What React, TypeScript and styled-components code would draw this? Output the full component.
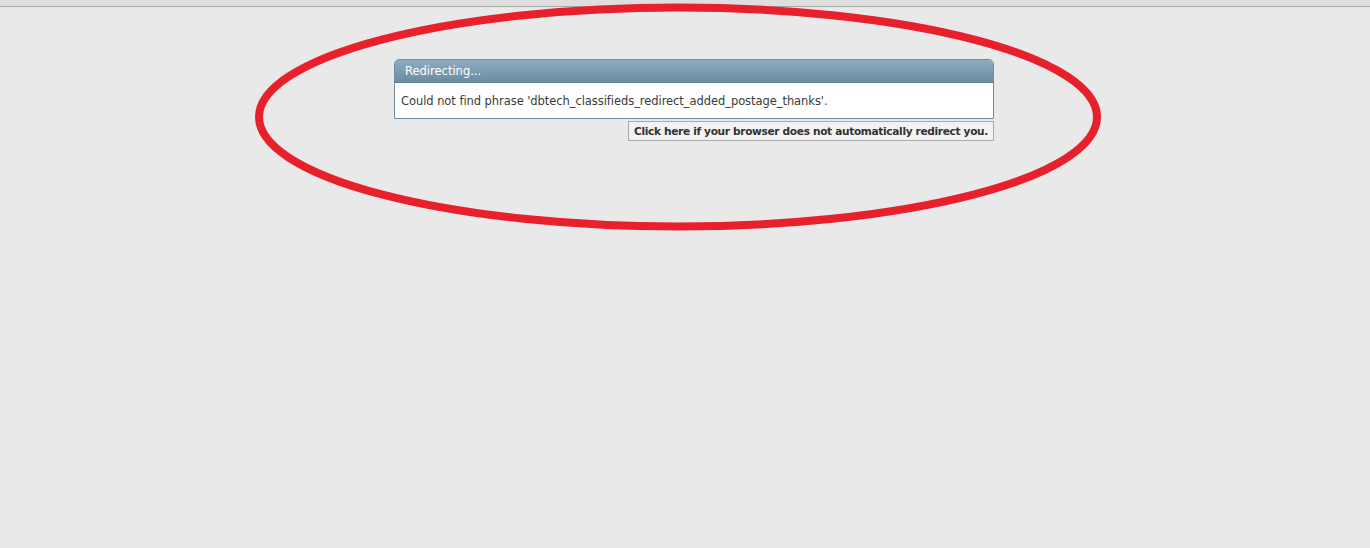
import React from "react";
import styled, { createGlobalStyle } from "styled-components";

const GlobalStyle = createGlobalStyle`
  html, body {
    margin: 0;
    padding: 0;
    background: #e9e9e9;
  }
  body {
    font-family: "DejaVu Sans", Verdana, sans-serif;
    color: #333;
  }
`;

const Page = styled.div`
  position: relative;
  min-height: 548px;
  overflow: hidden;
`;

const TopStrip = styled.div`
  height: 6px;
  background: #dedede;
  border-bottom: 1px solid #a8a8a8;
`;

const Content = styled.div`
  display: flex;
  flex-direction: column;
  align-items: flex-end;
  width: 600px;
  margin: 52px 0 0 394px;
  gap: 2px;
`;

const Block = styled.div`
  width: 100%;
  box-sizing: border-box;
  border: 1px solid #6f8ea3;
  border-radius: 5px 5px 0 0;
  background: #fff;
`;

const BlockHead = styled.div`
  height: 22px;
  display: flex;
  align-items: center;
  padding: 0 10px;
  border-radius: 4px 4px 0 0;
  background: linear-gradient(#8facbe, #6a8ca1);
  border-bottom: 1px solid #5e7f94;
  color: #fff;
  font-size: 11.5px;
`;

const BlockBody = styled.div`
  height: 35px;
  display: flex;
  align-items: center;
  padding: 0 6px;
  font-size: 11.5px;
  letter-spacing: -0.06px;
  color: #3a3a3a;
`;

const RedirectLink = styled.a`
  display: flex;
  align-items: center;
  height: 18px;
  padding: 0 5px;
  border: 1px solid #a9a9a9;
  background: #f2f2f2;
  font-size: 10.6px;
  font-weight: bold;
  letter-spacing: -0.34px;
  color: #333;
  text-decoration: none;
  cursor: pointer;
`;

const Mark = styled.svg`
  position: absolute;
  left: 0;
  top: 0;
  pointer-events: none;
`;

export default function App() {
  return (
    <Page>
      <GlobalStyle />
      <TopStrip />
      <Content>
        <Block>
          <BlockHead>Redirecting...</BlockHead>
          <BlockBody>
            Could not find phrase 'dbtech_classifieds_redirect_added_postage_thanks'.
          </BlockBody>
        </Block>
        <RedirectLink href="#">
          Click here if your browser does not automatically redirect you.
        </RedirectLink>
      </Content>
      <Mark width="1370" height="548" viewBox="0 0 1370 548">
        <ellipse
          cx="678"
          cy="117"
          rx="419"
          ry="109.5"
          fill="none"
          stroke="#e8202b"
          strokeWidth="8"
        />
      </Mark>
    </Page>
  );
}
